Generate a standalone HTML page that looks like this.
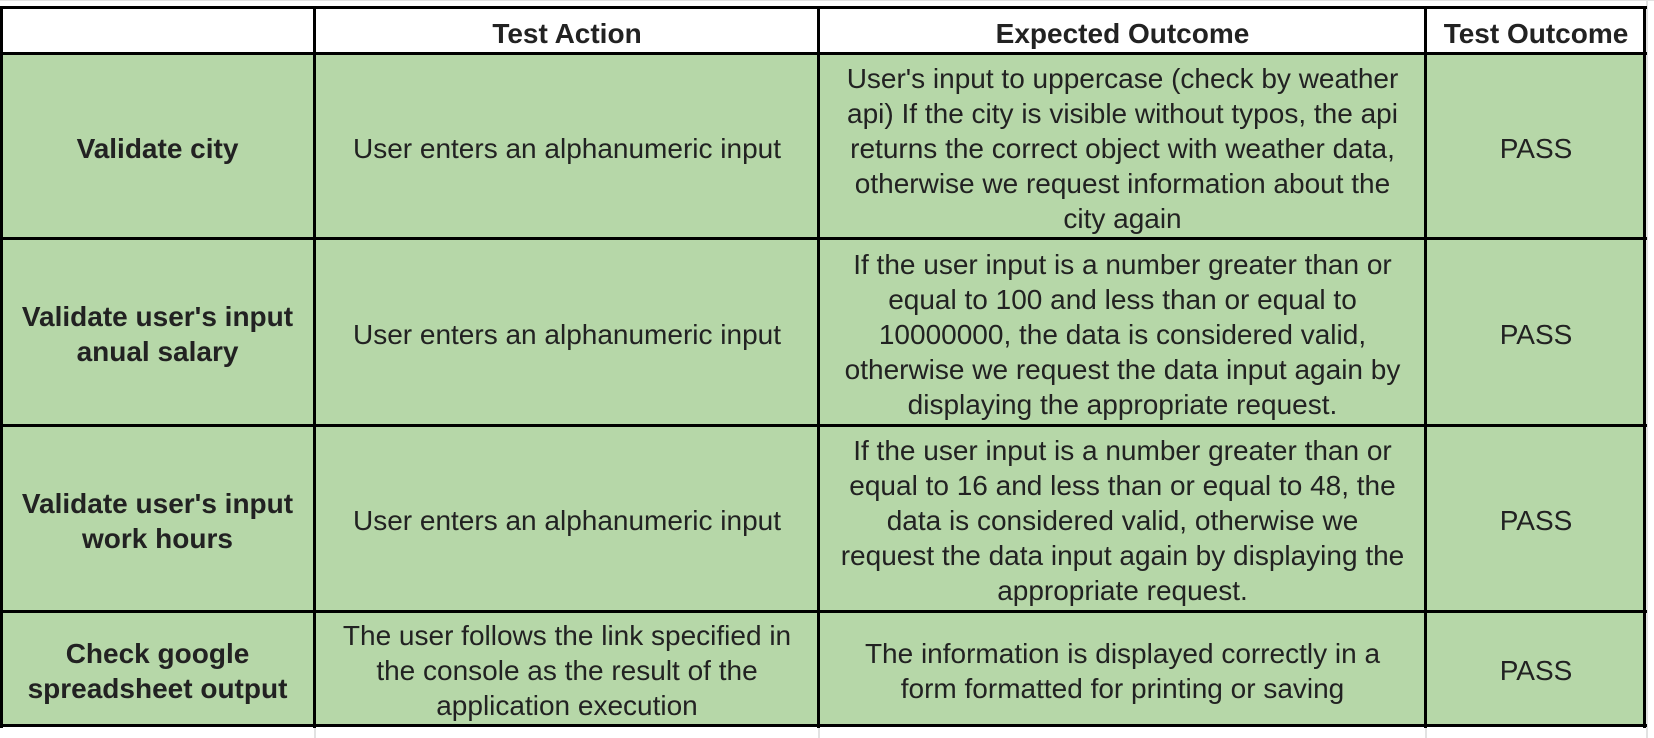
<!DOCTYPE html>
<html><head><meta charset="utf-8"><style>
html,body{margin:0;padding:0;width:1654px;height:738px;background:#fff;overflow:hidden;position:relative;}
.g{position:absolute;background:#e2e2e2;}
.c{position:absolute;display:flex;align-items:center;justify-content:center;text-align:center;font-family:"Liberation Sans",Arial,Helvetica,sans-serif;font-size:28px;line-height:35px;color:#222;box-sizing:border-box;padding:3px 2px 0;white-space:nowrap;}
.b{font-weight:bold;}
.gr{background:#b6d7a8;}
.h{position:absolute;background:#000;height:3px;left:0;width:1647px;}
.v{position:absolute;background:#000;width:3px;top:6px;height:722px;}
</style></head><body>
<div class="g" style="left:1646px;top:0;width:2px;height:738px"></div>
<div class="g" style="left:0;top:0;width:1654px;height:1px"></div>
<div class="g" style="left:314px;top:728px;width:2px;height:10px"></div>
<div class="g" style="left:818px;top:728px;width:2px;height:10px"></div>
<div class="g" style="left:1425px;top:728px;width:2px;height:10px"></div>

<div class="c b" style="left:0;top:7px;width:315px;height:47px;background:#fff"></div>
<div class="c b" style="left:315px;top:7px;width:504px;height:47px;background:#fff;padding-top:6px">Test Action</div>
<div class="c b" style="left:819px;top:7px;width:607px;height:47px;background:#fff;padding-top:6px">Expected Outcome</div>
<div class="c b" style="left:1426px;top:7px;width:220px;height:47px;background:#fff;padding-top:6px">Test Outcome</div>

<div class="c b gr" style="left:0;top:54px;width:315px;height:185px">Validate city</div>
<div class="c gr" style="left:315px;top:54px;width:504px;height:185px">User enters an alphanumeric input</div>
<div class="c gr" style="left:819px;top:54px;width:607px;height:185px">User's input to uppercase (check by weather<br>api) If the city is visible without typos, the api<br>returns the correct object with weather data,<br>otherwise we request information about the<br>city again</div>
<div class="c gr" style="left:1426px;top:54px;width:220px;height:185px">PASS</div>

<div class="c b gr" style="left:0;top:239px;width:315px;height:187px">Validate user's input<br>anual salary</div>
<div class="c gr" style="left:315px;top:239px;width:504px;height:187px">User enters an alphanumeric input</div>
<div class="c gr" style="left:819px;top:239px;width:607px;height:187px">If the user input is a number greater than or<br>equal to 100 and less than or equal to<br>10000000, the data is considered valid,<br>otherwise we request the data input again by<br>displaying the appropriate request.</div>
<div class="c gr" style="left:1426px;top:239px;width:220px;height:187px">PASS</div>

<div class="c b gr" style="left:0;top:426px;width:315px;height:186px">Validate user's input<br>work hours</div>
<div class="c gr" style="left:315px;top:426px;width:504px;height:186px">User enters an alphanumeric input</div>
<div class="c gr" style="left:819px;top:426px;width:607px;height:186px">If the user input is a number greater than or<br>equal to 16 and less than or equal to 48, the<br>data is considered valid, otherwise we<br>request the data input again by displaying the<br>appropriate request.</div>
<div class="c gr" style="left:1426px;top:426px;width:220px;height:186px">PASS</div>

<div class="c b gr" style="left:0;top:612px;width:315px;height:114px">Check google<br>spreadsheet output</div>
<div class="c gr" style="left:315px;top:612px;width:504px;height:114px">The user follows the link specified in<br>the console as the result of the<br>application execution</div>
<div class="c gr" style="left:819px;top:612px;width:607px;height:114px">The information is displayed correctly in a<br>form formatted for printing or saving</div>
<div class="c gr" style="left:1426px;top:612px;width:220px;height:114px">PASS</div>

<div class="h" style="top:6px"></div>
<div class="h" style="top:52px"></div>
<div class="h" style="top:237px"></div>
<div class="h" style="top:424px"></div>
<div class="h" style="top:610px"></div>
<div class="h" style="top:724px"></div>
<div class="v" style="left:0"></div>
<div class="v" style="left:313px"></div>
<div class="v" style="left:817px"></div>
<div class="v" style="left:1424px"></div>
<div class="v" style="left:1643px"></div>
</body></html>
